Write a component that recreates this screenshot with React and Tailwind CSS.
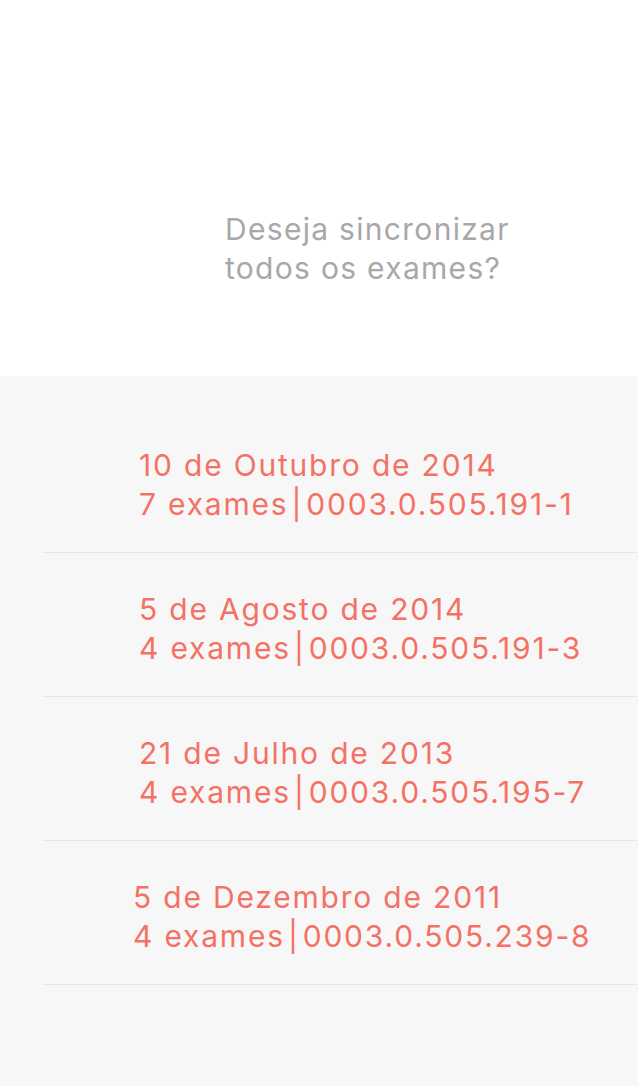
import React from 'react';

const exams = [
    { date: '10 de Outubro de 2014', count: 7, code: '0003.0.505.191-1', indent: 'pl-[96px]' },
    { date: '5 de Agosto de 2014', count: 4, code: '0003.0.505.191-3', indent: 'pl-[96px]' },
    { date: '21 de Julho de 2013', count: 4, code: '0003.0.505.195-7', indent: 'pl-[96px]' },
    { date: '5 de Dezembro de 2011', count: 4, code: '0003.0.505.239-8', indent: 'pl-[90px]' },
];

function ExamRow({ exam }) {
    return (
        <div className="ml-[43px] h-[144px] border-b border-[#e6e6e6] flex items-center">
            <div className={`${exam.indent} pt-[8px] text-[#f37265] text-[30px] leading-[39px] tracking-[1.8px]`}>
                <p>{exam.date}</p>
                <p>
                    {exam.count} exames<span className="mx-[3px]">|</span>{exam.code}
                </p>
            </div>
        </div>
    );
}

export default function App() {
    return (
        <div className="w-[638px] h-[1086px] bg-[#f7f7f7] overflow-hidden" style={{ fontFamily: '"Inter", "Noto Sans", sans-serif' }}>
            {/* prompt */}
            <div className="h-[376px] bg-white pt-[210px] pl-[225px]">
                <p className="text-[#a8a8a8] text-[30px] leading-[39px] tracking-[1.3px]">
                    Deseja sincronizar<br />todos os exames?
                </p>
            </div>

            {/* exam list */}
            <div className="pt-[33px]">
                {exams.map((exam) => (
                    <ExamRow key={exam.code} exam={exam} />
                ))}
            </div>
        </div>
    );
}
